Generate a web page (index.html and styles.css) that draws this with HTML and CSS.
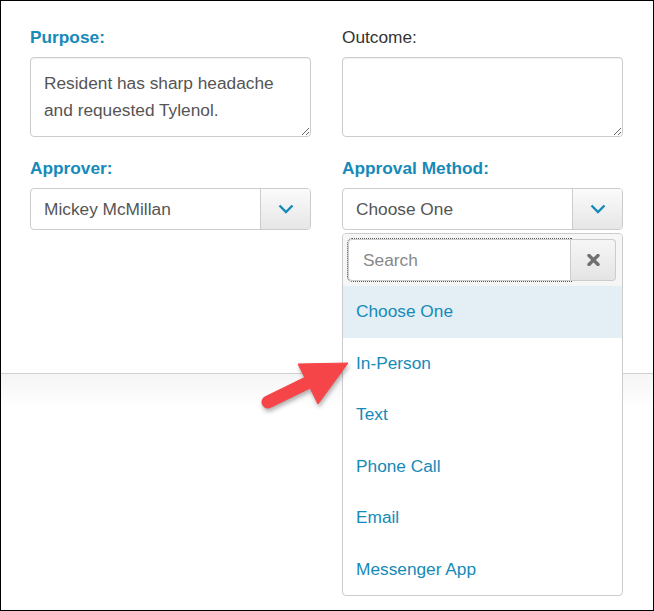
FILE: index.html
```html
<!DOCTYPE html>
<html>

<head>
  <title>Approval</title>

  <link rel="stylesheet" href="styles.css">
</head>

<body>
  <div class="frame">
    <div class="modal-body">
      <div class="field">
        <label class="field-label">Purpose:</label>
        <textarea class="text-box">Resident has sharp headache and requested Tylenol.</textarea>
      </div>

      <div class="field">
        <label class="field-label field-label--plain">Outcome:</label>
        <textarea class="text-box"></textarea>
      </div>

      <div class="field">
        <label class="field-label">Approver:</label>
        <div class="select-box">
          <span class="select-value">Mickey McMillan</span>
          <span class="select-btn">
            <svg width="16" height="10" viewBox="0 0 16 10"><polyline points="1.5,1.5 8,8 14.5,1.5" /></svg>
          </span>
        </div>
      </div>

      <div class="field">
        <label class="field-label">Approval Method:</label>
        <div class="select-wrap">
          <div class="select-box">
            <span class="select-value">Choose One</span>
            <span class="select-btn">
              <svg width="16" height="10" viewBox="0 0 16 10"><polyline points="1.5,1.5 8,8 14.5,1.5" /></svg>
            </span>
          </div>

          <!-- Open dropdown menu -->
          <div class="dropdown">
            <div class="dropdown-search">
              <div class="search-group">
                <span class="search-input">Search</span>
                <span class="search-clear">
                  <svg width="13" height="12" viewBox="0 0 13 12"><path d="M2 1.5 L11 10.5 M11 1.5 L2 10.5" /></svg>
                </span>
              </div>
            </div>
            <ul class="options">
              <li class="option option--active">Choose One</li>
              <li class="option">In-Person</li>
              <li class="option">Text</li>
              <li class="option">Phone Call</li>
              <li class="option">Email</li>
              <li class="option">Messenger App</li>
            </ul>
          </div>
        </div>
      </div>
    </div>

    <div class="modal-footer"></div>

    <!-- Callout arrow -->
    <svg class="callout-arrow" width="100" height="62" viewBox="0 0 100 62">
      <line x1="13" y1="47" x2="54" y2="27" />
      <polygon points="93,8 43,9 63,49" />
    </svg>
  </div>
</body>

</html>
```

FILE: styles.css
```css
* {
  margin: 0;
  padding: 0;
  box-sizing: border-box;
}

:root {
  --blue: #168ab8;
  --border: #cccccc;
  --text: #555555;
}

body {
  font-family: 'Liberation Sans', Arial, sans-serif;
  font-size: 17.3px;
  background-color: #fff;
}

.frame {
  position: relative;
  height: 611px;
  border: 1px solid #000;
  overflow: hidden;
  background-color: #fff;
}

.modal-body {
  display: grid;
  grid-template-columns: 281px 281px;
  column-gap: 31px;
  row-gap: 19px;
  align-content: start;
  height: 373px;
  padding: 24px 0 0 29px;
  border-bottom: 1px solid #d0d0d0;
}

.modal-footer {
  height: 236px;
  background: linear-gradient(#f5f5f5, #fff 34px);
}

.field {
  display: flex;
  flex-direction: column;
}

.field-label {
  display: block;
  line-height: 24px;
  margin-bottom: 8px;
  font-weight: 700;
  color: var(--blue);
}

.field-label--plain {
  font-weight: 400;
  color: #333;
}

.text-box {
  display: block;
  width: 281px;
  height: 80px;
  padding: 12px 13px;
  border: 1px solid var(--border);
  border-radius: 4px;
  font-family: inherit;
  font-size: 17.3px;
  line-height: 27px;
  color: var(--text);
  resize: vertical;
  box-shadow: inset 0 1px 1px rgba(0, 0, 0, 0.06);
}

.select-wrap {
  position: relative;
}

.select-box {
  display: flex;
  height: 42px;
  border: 1px solid var(--border);
  border-radius: 4px;
  overflow: hidden;
}

.select-value {
  flex: 1;
  display: flex;
  align-items: center;
  padding-left: 13px;
  color: var(--text);
}

.select-btn {
  display: flex;
  align-items: center;
  justify-content: center;
  width: 50px;
  border-left: 1px solid var(--border);
  background: linear-gradient(#fbfbfb, #e6e6e6);
}

.select-btn svg polyline {
  fill: none;
  stroke: var(--blue);
  stroke-width: 2.4;
}

/* Dropdown menu */
.dropdown {
  position: absolute;
  top: 45px;
  left: 0;
  width: 281px;
  border: 1px solid var(--border);
  border-radius: 4px;
  background-color: #fff;
  overflow: hidden;
}

.dropdown-search {
  padding: 5px 6px 5px 5px;
  background-color: #f6f6f6;
}

.search-group {
  display: flex;
  height: 42px;
}

.search-input {
  flex: 1;
  display: flex;
  align-items: center;
  padding-left: 14px;
  border: 1px solid var(--border);
  border-radius: 4px 0 0 4px;
  background-color: #fff;
  color: #888;
  outline: 1px dotted #555;
}

.search-clear {
  display: flex;
  align-items: center;
  justify-content: center;
  width: 45px;
  border: 1px solid var(--border);
  border-left: none;
  border-radius: 0 4px 4px 0;
  background: linear-gradient(#f6f6f6, #e4e4e4);
}

.search-clear svg path {
  stroke: #707070;
  stroke-width: 3.4;
  stroke-linecap: round;
}

.options {
  list-style: none;
}

.option {
  display: flex;
  align-items: center;
  height: 51.5px;
  padding-left: 13px;
  color: var(--blue);
}

.option--active {
  background-color: #e3eff5;
}

/* Callout arrow */
.callout-arrow {
  position: absolute;
  left: 254px;
  top: 354px;
  overflow: visible;
  filter: drop-shadow(1px 3px 2px rgba(0, 0, 0, 0.3));
}

.callout-arrow line {
  stroke: #f54548;
  stroke-width: 13;
  stroke-linecap: round;
}

.callout-arrow polygon {
  fill: #f54548;
  stroke: #f54548;
  stroke-width: 1;
  stroke-linejoin: round;
}
```
